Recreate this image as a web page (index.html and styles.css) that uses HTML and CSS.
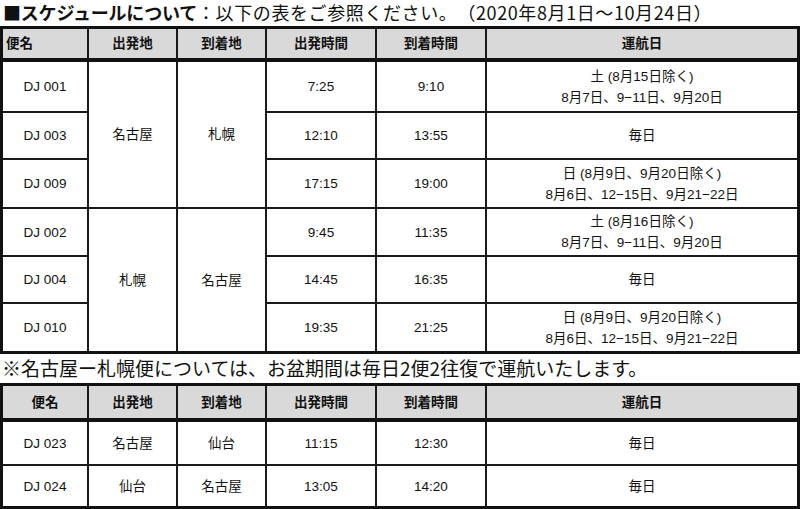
FILE: index.html
```html
<!DOCTYPE html>
<html lang="ja">
<head>
<meta charset="utf-8">
<title>スケジュール</title>
<link rel="stylesheet" href="styles.css">
</head>
<body>
<div class="title"><b>■スケジュールについて</b><span class="rest">：以下の表をご参照ください。（2020年8月1日～10月24日）</span></div>
<table class="sched">
  <tr class="head">
    <th class="c1 left">便名</th>
    <th class="c2">出発地</th>
    <th class="c3">到着地</th>
    <th class="c4">出発時間</th>
    <th class="c5">到着時間</th>
    <th class="c6 last">運航日</th>
  </tr>
  <tr>
    <td class="h51">DJ 001</td>
    <td rowspan="3" class="grp">名古屋</td>
    <td rowspan="3" class="grp">札幌</td>
    <td>7:25</td>
    <td>9:10</td>
    <td class="last">土 (8月15日除く)<br>8月7日、9−11日、9月20日</td>
  </tr>
  <tr>
    <td class="h47">DJ 003</td>
    <td>12:10</td>
    <td>13:55</td>
    <td class="last">毎日</td>
  </tr>
  <tr class="grpend">
    <td class="h49">DJ 009</td>
    <td>17:15</td>
    <td>19:00</td>
    <td class="last">日 (8月9日、9月20日除く)<br>8月6日、12−15日、9月21−22日</td>
  </tr>
  <tr>
    <td class="h48">DJ 002</td>
    <td rowspan="3" class="bottom">札幌</td>
    <td rowspan="3" class="bottom">名古屋</td>
    <td>9:45</td>
    <td>11:35</td>
    <td class="last">土 (8月16日除く)<br>8月7日、9−11日、9月20日</td>
  </tr>
  <tr>
    <td class="h47">DJ 004</td>
    <td>14:45</td>
    <td>16:35</td>
    <td class="last">毎日</td>
  </tr>
  <tr class="final">
    <td class="h47">DJ 010</td>
    <td>19:35</td>
    <td>21:25</td>
    <td class="last">日 (8月9日、9月20日除く)<br>8月6日、12−15日、9月21−22日</td>
  </tr>
</table>
<div class="note">※名古屋ー札幌便については、お盆期間は毎日2便2往復で運航いたします。</div>
<table class="sched">
  <tr class="head head2">
    <th class="c1">便名</th>
    <th class="c2">出発地</th>
    <th class="c3">到着地</th>
    <th class="c4">出発時間</th>
    <th class="c5">到着時間</th>
    <th class="c6 last">運航日</th>
  </tr>
  <tr>
    <td class="h44">DJ 023</td>
    <td>名古屋</td>
    <td>仙台</td>
    <td>11:15</td>
    <td>12:30</td>
    <td class="last">毎日</td>
  </tr>
  <tr class="final">
    <td class="h40">DJ 024</td>
    <td>仙台</td>
    <td>名古屋</td>
    <td>13:05</td>
    <td>14:20</td>
    <td class="last">毎日</td>
  </tr>
</table>
</body>
</html>
```
FILE: styles.css
```css
html, body {
  margin: 0;
  padding: 0;
  background: #ffffff;
}
body {
  width: 800px;
  height: 509px;
  overflow: hidden;
  font-family: "Liberation Sans", "Noto Sans CJK JP", sans-serif;
  color: #111;
}
.title {
  height: 26px;
  line-height: 24px;
  font-size: 18px;
  padding-left: 3px;
  white-space: nowrap;
  font-family: "Noto Sans CJK JP", sans-serif;
  text-spacing-trim: space-all;
}
.title b {
  font-weight: 700;
  letter-spacing: -0.2px;
}
.title .rest {
  letter-spacing: 0.6px;
}
.note {
  height: 29px;
  line-height: 28px;
  font-size: 19px;
  padding-left: 2px;
  white-space: nowrap;
  font-family: "Noto Sans CJK JP", sans-serif;
  text-spacing-trim: space-all;
}
.sched {
  width: 800px;
  table-layout: fixed;
  border-collapse: separate;
  border-spacing: 0;
  border: 3px solid #111;
}
.sched th, .sched td {
  box-sizing: border-box;
  padding: 0;
  border-right: 2px solid #1a1a1a;
  border-bottom: 2px solid #1a1a1a;
  text-align: center;
  vertical-align: middle;
  font-size: 13.5px;
  line-height: 21px;
}
.sched th {
  background: #d9d9d9;
  font-weight: 700;
  height: 33px;
  border-bottom: 4px solid #111;
}
.sched .head2 th {
  height: 36px;
}
.sched th.left {
  text-align: left;
  padding-left: 3px;
}
.sched .last {
  border-right: none;
}
.c1 { width: 86px; }
.c2 { width: 89px; }
.c3 { width: 89px; }
.c4 { width: 110px; }
.c5 { width: 110px; }
.c6 { width: 310px; }
.sched tr.final td, .sched td.bottom {
  border-bottom: none;
}
.h51 { height: 51px; }
.h47 { height: 47px; }
.h49 { height: 49px; }
.h48 { height: 48px; }
.h44 { height: 44px; }
.h40 { height: 40px; }
```
